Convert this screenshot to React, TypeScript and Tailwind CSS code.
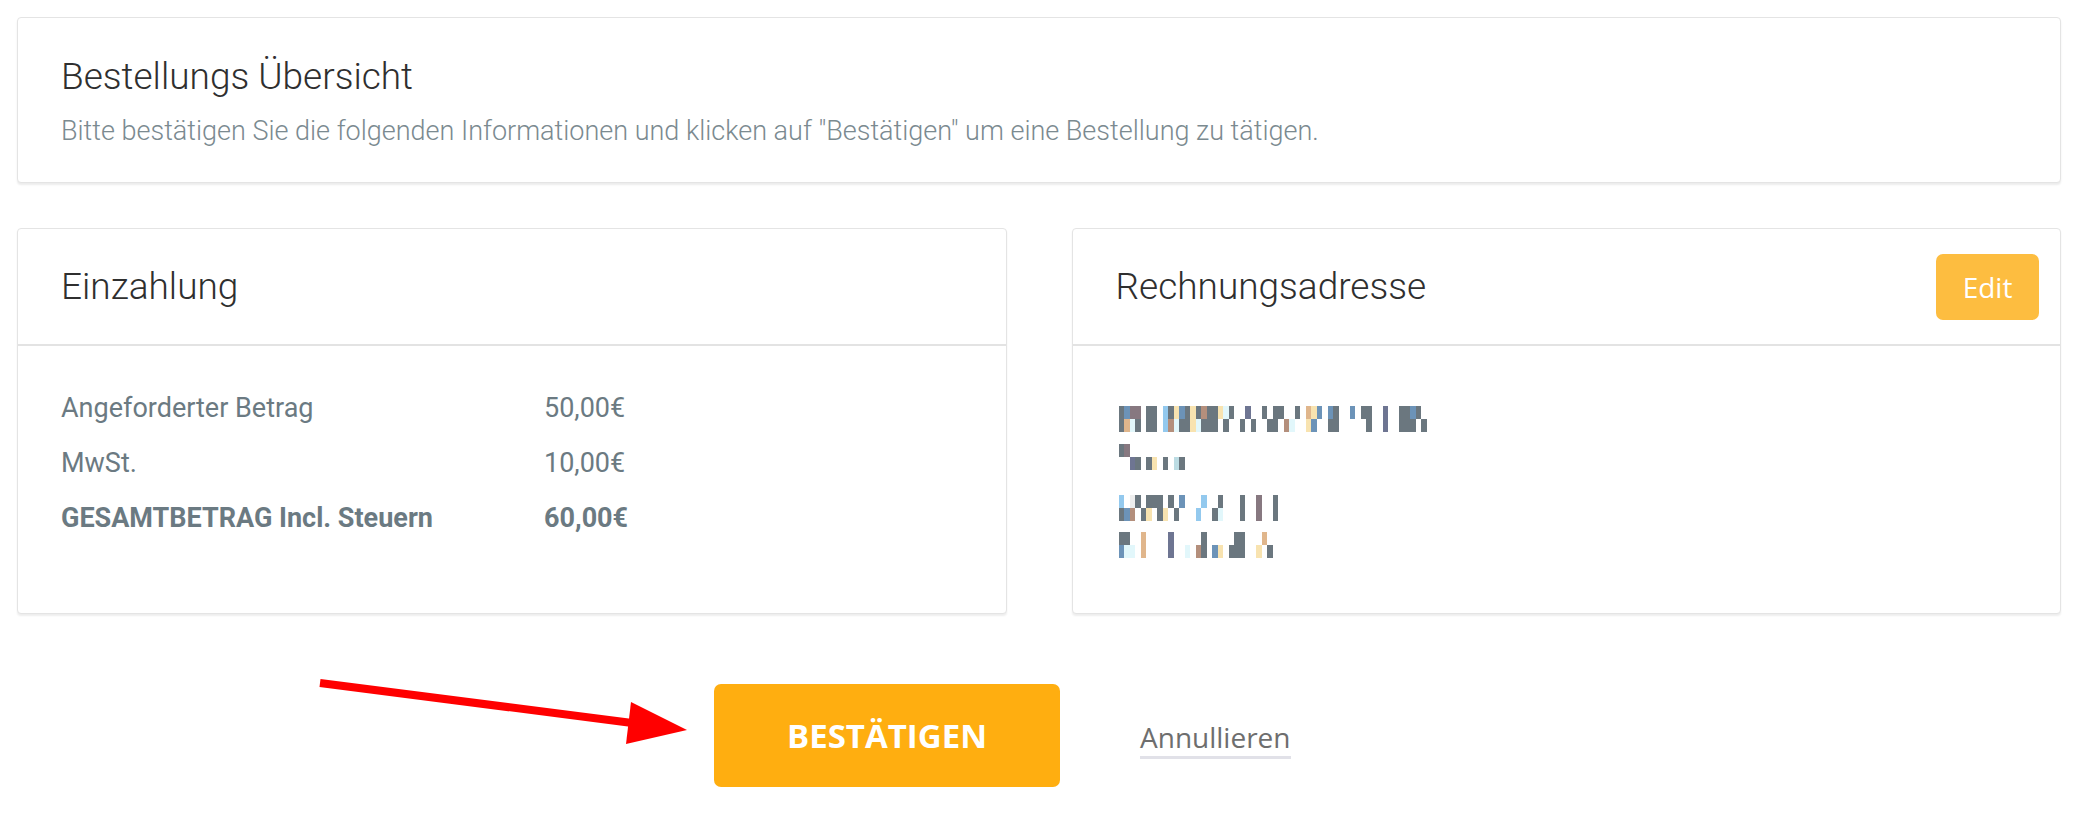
import React from "react";

const roboto = { fontFamily: "Roboto, 'Liberation Sans', sans-serif" };
const robotoLight = { fontFamily: "'Roboto Light', Roboto, 'Liberation Sans', sans-serif" };

// colour map for the pixelated (blurred) address block
const cellColors: Record<string, string> = {
  ".": "bg-transparent",
  g: "bg-[#6b777f]",
  b: "bg-[#6c93b8]",
  l: "bg-[#93c9ee]",
  c: "bg-[#e2f7fb]",
  t: "bg-[#e0b68c]",
  y: "bg-[#f8e3b0]",
  p: "bg-[#6e7592]",
  r: "bg-[#b48f7c]",
  m: "bg-[#877880]",
  w: "bg-[#eeeeee]",
  k: "bg-[#bcdce3]",
};

const addressLines = [
  {
    top: "gbmm.gg.lgybgygrggycg..p..g.gg..g.tyb.bg..b.gg..p..ggbg",
    bottom: "gtcg.gg.lrcggycggg.g..g.g..gg.rc..yb..gg.....g..p..ggg.g",
    mt: "mt-0",
  },
  {
    top: "gm..........",
    bottom: "..pg.gy.g.kg",
    mt: "mt-[12px]",
  },
  {
    top: "l.wg.ggg.g.b...l..g...g..m..g",
    bottom: "gbr.gy.gy.g...l..gc...g..m..g",
    mt: "mt-[25px]",
  },
  {
    top: "gg..t....p.....g.....gg...t.",
    bottom: "bcc.t....p..c.rg.by.ggg..y.g",
    mt: "mt-[11px]",
  },
];

function CellRow({ cells }: { cells: string }) {
  return (
    <div className="flex h-[13px]">
      {cells.split("").map((ch, i) => (
        <span key={i} className={`w-[5.5px] h-full ${cellColors[ch] ?? "bg-transparent"}`} />
      ))}
    </div>
  );
}

function Card({
  title,
  action,
  children,
}: {
  title: string;
  action?: React.ReactNode;
  children: React.ReactNode;
}) {
  return (
    <div className="flex flex-col bg-white border border-[#e4e4e4] rounded-[4px] shadow-[0_2px_2px_rgba(0,0,0,0.07)]">
      {/* Header */}
      <div className="flex items-center justify-between h-[117px] pl-[43px] pr-[21px] border-b-[2px] border-[#e3e3e3]">
        <h2 className="text-[37px] font-light text-[#2f2f2f] leading-none" style={robotoLight}>
          {title}
        </h2>
        {action}
      </div>
      <div className="flex-1">{children}</div>
    </div>
  );
}

export default function App() {
  return (
    <div className="relative min-h-screen bg-white pt-[17px] pl-[17px] pr-[20px]" style={roboto}>
      {/* ÜBERSICHT */}
      <section className="bg-white border border-[#e4e4e4] rounded-[4px] shadow-[0_2px_2px_rgba(0,0,0,0.08)] pl-[43px] pt-[37px] pb-[33px]">
        <h1 className="text-[37px] font-light text-[#2f2f2f] leading-[44px]" style={robotoLight}>
          Bestellungs Übersicht
        </h1>
        <p className="mt-[14px] text-[27px] font-light text-[#7b8a90] leading-[36px]" style={robotoLight}>
          Bitte bestätigen Sie die folgenden Informationen und klicken auf "Bestätigen" um eine Bestellung zu tätigen.
        </p>
      </section>

      <div className="grid grid-cols-2 gap-x-[65px] mt-[45px]">
        {/* EINZAHLUNG */}
        <Card title="Einzahlung">
          <div className="pl-[43px] pt-[35px] pb-[67px] text-[27px] leading-[55px] text-[#6b7a82]">
            <div className="flex">
              <span className="w-[483px]">Angeforderter Betrag</span>
              <span>50,00€</span>
            </div>
            <div className="flex">
              <span className="w-[483px]">MwSt.</span>
              <span>10,00€</span>
            </div>
            <div className="flex font-bold">
              <span className="w-[483px]">GESAMTBETRAG Incl. Steuern</span>
              <span>60,00€</span>
            </div>
          </div>
        </Card>

        {/* RECHNUNGSADRESSE */}
        <Card
          title="Rechnungsadresse"
          action={
            <button
              type="button"
              className="w-[103px] h-[66px] rounded-[7px] bg-[#fdbd40] text-white text-[28px]"
              style={{ fontFamily: "'Open Sans', sans-serif" }}
            >
              Edit
            </button>
          }
        >
          <div className="pl-[46px] pt-[60px]">
            {addressLines.map((line, i) => (
              <div key={i} className={line.mt}>
                <CellRow cells={line.top} />
                <CellRow cells={line.bottom} />
              </div>
            ))}
          </div>
        </Card>
      </div>

      {/* AÇÕES */}
      <div className="flex items-center mt-[70px] pl-[697px]">
        <button
          type="button"
          className="w-[346px] h-[103px] rounded-[7px] bg-[#ffae10] text-white text-[33px] font-bold"
          style={{ fontFamily: "'Open Sans', sans-serif" }}
        >
          BESTÄTIGEN
        </button>
        <a
          href="#"
          className="ml-[80px] mt-[6px] text-[28px] text-[#6e6e6e] leading-[38px] border-b-[3px] border-[#e1e1e8]"
          style={{ fontFamily: "'Open Sans', sans-serif" }}
        >
          Annullieren
        </a>
      </div>

      {/* red annotation arrow */}
      <svg className="absolute left-0 top-0 pointer-events-none" width="2081" height="813">
        <line x1="320" y1="683" x2="640" y2="724" stroke="#ff0000" strokeWidth="8" />
        <polygon points="631,702 687,730 626,744" fill="#ff0000" />
      </svg>
    </div>
  );
}
